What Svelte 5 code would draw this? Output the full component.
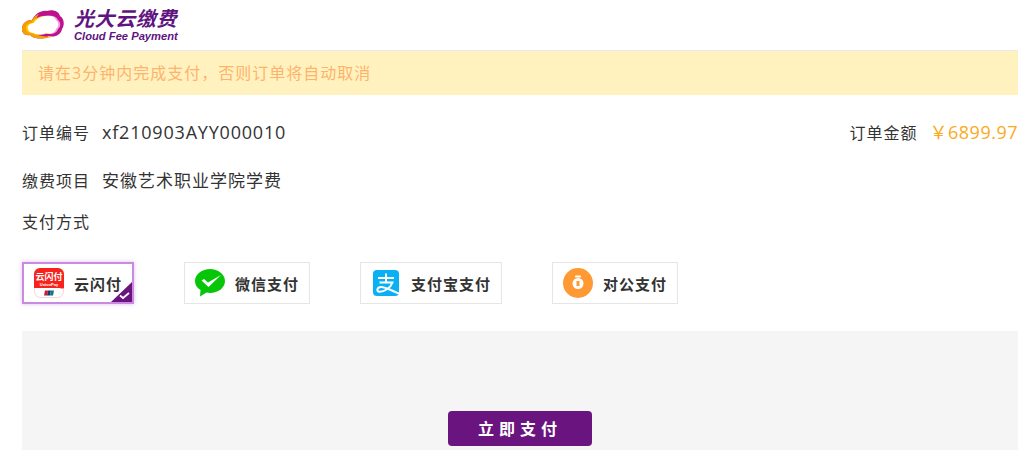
<script>
  const methods = [
    { key: 'unionpay', label: '云闪付', width: 112 },
    { key: 'wechat', label: '微信支付', width: 126 },
    { key: 'alipay', label: '支付宝支付', width: 142 },
    { key: 'corporate', label: '对公支付', width: 126 }
  ];
  let selected = 'unionpay';

  const cloud = 'M6 19C5 15 9 13 12 13C14 9 19 6 24 6C29 5 33 7 34 10C37 12 37 17 34 19C33 23 28 25 24 23C20 25 14 25 12 23C9 23 7 22 6 19Z';
</script>

<div class="page">
  <header class="logo">
    <svg class="logo-mark" width="42" height="29" viewBox="0 0 42 29">
      <defs>
        <linearGradient id="logo-orange" x1="0" y1="0" x2="1" y2="0.3">
          <stop offset="0" stop-color="#f79a00"/>
          <stop offset="1" stop-color="#f5a800"/>
        </linearGradient>
      </defs>
      <path d="M0 19C0 13 5 10 10 10C13 4 19 0 25 1C30 -1 37 1 38 6C42 8 43 15 40 19C39 25 32 28 27 26C21 30 11 29 8 25C3 26 0 23 0 19Z" fill="#bd1190"/>
      <path d="M0 19C0 13 5 10 10 10C12 7 14 5 17 4C14 9 10 14 10 18C10 24 17 27 30 26.500C23 30 11 29 8 25C3 26 0 23 0 19Z" fill="url(#logo-orange)"/>
      <path d={cloud} transform="translate(2 0)" fill="#f0a0dc"/>
      <path d={cloud} transform="translate(-2 0)" fill="#ffcc00"/>
      <path d={cloud} fill="#fff"/>
    </svg>
    <div class="logo-text">
      <strong>光大云缴费</strong>
      <span>Cloud Fee Payment</span>
    </div>
  </header>

  <div class="notice">请在3分钟内完成支付，否则订单将自动取消</div>

  <div class="row order">
    <div><span class="label">订单编号</span><span class="value serial">xf210903AYY000010</span></div>
    <div><span class="label">订单金额</span><span class="value amount">￥6899.97</span></div>
  </div>
  <div class="row project"><div><span class="label">缴费项目</span><span class="value">安徽艺术职业学院学费</span></div></div>
  <div class="row way">支付方式</div>

  <div class="methods">
    {#each methods as m}
      <button class="method" class:active={selected === m.key} style="width: {m.width}px" on:click={() => (selected = m.key)}>
        {#if m.key === 'unionpay'}
          <svg width="30" height="30" viewBox="0 0 30 30">
            <rect x="0.5" y="0.5" width="29" height="29" rx="6" fill="#fff" stroke="#f3d5dc"/>
            <path d="M0 6a6 6 0 0 1 6-6h18a6 6 0 0 1 6 6v14a4 4 0 0 1-4 0H0z" fill="#f8221c"/>
            <text x="15" y="12" class="up-a">云闪付</text>
            <text x="15" y="18" class="up-b">UnionPay</text>
            <path d="M11 22.500h3l-1 5h-3z" fill="#d8142c"/>
            <path d="M14 22.500h3l-1 5h-3z" fill="#123a78"/>
            <path d="M17 22.500h3l-1 5h-3z" fill="#0c7a78"/>
          </svg>
        {:else if m.key === 'wechat'}
          <svg width="30" height="28" viewBox="0 0 30 28">
            <path d="M15 0C7 0 0 5 0 12C0 16 2 19 5.500 21L5 27.500L11.500 23.500C12.500 23.800 14 24 15 24C23 24 30 19 30 12C30 5 23 0 15 0Z" fill="#07c60a"/>
            <path d="M6.500 11.500L9 10L13 13.500L26 6L13.500 18Z" fill="#fff"/>
          </svg>
        {:else if m.key === 'alipay'}
          <svg class="alipay" width="26" height="26" viewBox="0 0 26 26">
            <rect width="26" height="26" rx="4" fill="#09b0f4"/>
            <path d="M5 8H21M13 3.500V12.500M6.500 12.500H19.500C17.500 18 11 22 6.500 21.800C3 21.500 4 17 8 17C13 17 19 21 26 23.500" fill="none" stroke="#fff" stroke-width="2"/>
          </svg>
        {:else}
          <svg width="30" height="30" viewBox="0 0 30 30">
            <circle cx="15" cy="15" r="15" fill="#ff9933"/>
            <rect x="12" y="7.500" width="6" height="2" rx="1" fill="#fff"/>
            <circle cx="15" cy="15.500" r="5.500" fill="#fff"/>
            <rect x="13.500" y="13" width="3" height="5" fill="#ff9933"/>
          </svg>
        {/if}
        <span>{m.label}</span>
        {#if selected === m.key}
          <svg class="tick" width="21" height="20" viewBox="0 0 21 20">
            <path d="M21 0V20H0Z" fill="#6a1480"/>
            <path d="M9 13.500L12 16L18 11" fill="none" stroke="#fff" stroke-width="1.800"/>
          </svg>
        {/if}
      </button>
    {/each}
  </div>

  <section class="panel">
    <button class="pay">立即支付</button>
  </section>
</div>

<style>
  :global(body) {
    overflow: hidden;
    background: #fff;
  }
  .page {
    height: 450px;
    padding: 0 7px 0 22px;
    overflow: hidden;
    color: #333;
    font-family: "Open Sans", "Noto Sans CJK SC", sans-serif;
    font-size: 16px;
    letter-spacing: 1px;
    box-sizing: border-box;
  }
  .logo {
    display: flex;
    align-items: center;
    gap: 10px;
    height: 50px;
    box-sizing: border-box;
    padding-bottom: 1px;
    letter-spacing: 0;
  }
  .logo-text {
    display: flex;
    flex-direction: column;
    color: #5f1480;
    font-style: italic;
    padding-top: 2px;
  }
  .logo-text strong {
    font-size: 20px;
    line-height: 22px;
    letter-spacing: 0.6px;
    font-weight: 700;
  }
  .logo-text span {
    font-family: "Liberation Sans", sans-serif;
    font-size: 11.2px;
    line-height: 13px;
    font-weight: 700;
  }
  .notice {
    height: 45px;
    line-height: 45px;
    padding-left: 16px;
    border-top: 1px solid #e8e8ee;
    box-sizing: border-box;
    background: #fff2be;
    color: #ffb26b;
  }
  .row {
    display: flex;
    justify-content: space-between;
  }
  .order {
    margin-top: 25px;
    line-height: 24px;
    height: 25px;
  }
  .project {
    margin-top: 24px;
    line-height: 24px;
    height: 24px;
  }
  .way {
    margin-top: 17px;
    line-height: 24px;
  }
  .label {
    margin-right: 12px;
  }
  .value {
    font-size: 17px;
  }
  .serial {
    font-size: 18px;
    letter-spacing: 0.8px;
  }
  .amount {
    font-size: 18px;
    letter-spacing: 0.5px;
    color: #fbaa22;
  }
  .methods {
    display: flex;
    margin-top: 28px;
    gap: 50px;
  }
  .method {
    position: relative;
    display: flex;
    align-items: center;
    justify-content: center;
    gap: 10px;
    height: 42px;
    padding: 0;
    border: 1px solid #e6e6e6;
    background: #fff;
    color: #333;
    font: inherit;
    font-size: 15px;
    letter-spacing: 1px;
    font-weight: 700;
  }
  .method.active {
    border: 2px solid #c98be0;
    box-shadow: 0 0 4px rgba(190, 120, 220, 0.5);
  }
  .alipay {
    margin: 0 2px 0 2px;
  }
  .tick {
    position: absolute;
    right: 0;
    bottom: 0;
  }
  .up-a {
    font-size: 9px;
    letter-spacing: 0;
    fill: #fff;
    text-anchor: middle;
  }
  .up-b {
    font-size: 4px;
    letter-spacing: 0;
    fill: #fff;
    text-anchor: middle;
    font-family: "Liberation Sans", sans-serif;
  }
  .panel {
    display: flex;
    justify-content: center;
    margin-top: 27px;
    height: 200px;
    padding-top: 80px;
    box-sizing: border-box;
    background: #f5f5f5;
  }
  .pay {
    width: 144px;
    height: 35px;
    padding: 0 0 2px;
    border: 0;
    border-radius: 4px;
    background: #6a1480;
    color: #fff;
    font: inherit;
    font-weight: 700;
    letter-spacing: 5px;
  }
</style>
